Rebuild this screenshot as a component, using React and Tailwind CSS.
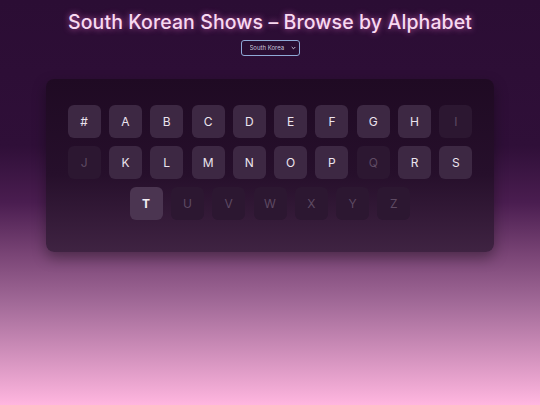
import React from 'react';

const rows = [
  ['#', 'A', 'B', 'C', 'D', 'E', 'F', 'G', 'H', 'I'],
  ['J', 'K', 'L', 'M', 'N', 'O', 'P', 'Q', 'R', 'S'],
  ['T', 'U', 'V', 'W', 'X', 'Y', 'Z'],
];

// letters with no shows yet
const disabled = new Set(['I', 'J', 'Q', 'U', 'V', 'W', 'X', 'Y', 'Z']);
const active = 'T';

function Key({ letter }) {
  const isOff = disabled.has(letter);
  const isActive = letter === active;
  let cls = 'bg-[#3d2843] text-[#ece4ee]';
  if (isOff) cls = 'bg-[#2c1731] text-[#5e4a63]';
  if (isActive) cls = 'bg-[#4b3551] text-[#f3eef5] font-bold';
  return (
    <button
      className={`w-[33px] h-[33px] rounded-[6px] flex items-center justify-center text-[12px] ${cls}`}
      disabled={isOff}
    >
      {letter}
    </button>
  );
}

export default function App() {
  return (
    <div
      className="min-h-screen w-full flex flex-col items-center bg-[linear-gradient(180deg,#2b0d34_0%,#2f0f38_36%,#4a1d50_50%,#7a4576_63%,#a26a98_75%,#ffb6df_100%)]"
      style={{ fontFamily: 'Inter, "Noto Sans", sans-serif' }}
    >
      <h1 className="mt-[8px] h-[29px] leading-[29px] text-[19.5px] font-medium tracking-[0.1px] text-[#f8d9f1] [text-shadow:0_0_6px_rgba(255,120,220,0.7)]">
        South Korean Shows – Browse by Alphabet
      </h1>

      <div className="relative mt-[3px] flex">
        <select className="block appearance-none w-[59px] h-[16px] rounded-[3px] border border-[#8fa9d6] bg-[#2a0e33] text-[#c9c6df] text-[6px] leading-[14px] pl-[8px] pr-[10px] outline-none">
          <option>South Korea</option>
        </select>
        <svg
          className="absolute right-[4px] top-[6px] pointer-events-none"
          width="5"
          height="4"
          viewBox="0 0 5 4"
          fill="none"
        >
          <path d="M0.7 1l1.8 1.8L4.3 1" stroke="#d8d6ea" strokeWidth="0.9" />
        </svg>
      </div>

      <div className="mt-[23px] w-[448px] rounded-[8px] bg-[linear-gradient(180deg,#1f0a23_0%,#260f2b_55%,#3f2342_100%)] shadow-[0_6px_14px_rgba(0,0,0,0.35)] pt-[26px] pb-[32px] flex flex-col items-center gap-[8px]">
        {rows.map((row, i) => (
          <div key={i} className="flex gap-[8.3px]">
            {row.map((l) => (
              <Key key={l} letter={l} />
            ))}
          </div>
        ))}
      </div>
    </div>
  );
}
